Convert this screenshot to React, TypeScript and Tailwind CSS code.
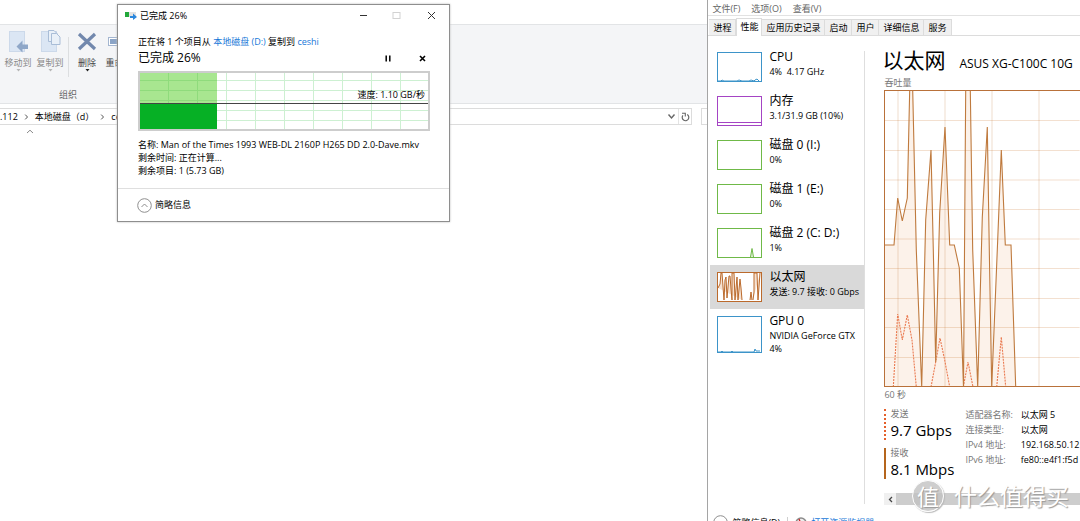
import type { ReactNode } from "react";

const solidLine =
  "0,155 10,155 13.7,108 18.3,131 23.3,108 25.7,0 28.7,0 32.3,160 37.7,297 41.7,130 47,60 49.3,160 51.7,272 55.7,123 61,37 65.7,155 70.3,155 75.3,178 79.5,297 81.7,0 86.3,0 88.7,160 93.7,297 98.3,127 103.3,37 105.3,160 107.7,297 113.7,150 117.3,60 121.3,155 127,155 131.7,297";

const dashedLines = [
  "9.3,297 13.7,224 18.3,250 23.3,225 28,250 32.3,297",
  "47,297 51.7,272 56,248 60.7,270 65.7,297",
  "79.3,297 84,272 89,297",
  "112.7,297 117.3,247 121.7,297",
];

function ThroughputChart() {
  return (
    <svg className="block h-[298px] w-full" role="img" aria-label="吞吐量">
      <polygon points={`0,297 ${solidLine}`} fill="#fcf2ea" />
      {[14, 61, 108, 155].map((x) => (
        <line key={x} x1={x} x2={x} y1="1" y2="297" stroke="#b5651d" strokeOpacity="0.15" strokeWidth="1.5" />
      ))}
      {[30.5, 60.5, 90, 119.5, 149, 178.5, 208.5, 237.5, 267.5].map((y) => (
        <line key={y} x1="0" x2="100%" y1={y} y2={y} stroke="#c8702a" strokeOpacity="0.22" />
      ))}
      {dashedLines.map((points) => (
        <polyline key={points} points={points} fill="none" stroke="#ea7a50" strokeWidth="1.1" strokeDasharray="2 1" />
      ))}
      <polyline points={solidLine} fill="none" stroke="#bf7a3e" strokeWidth="1.1" />
      <path d="M0.5 297V0.5M0 0.5H2000M0 296.5H2000" fill="none" stroke="#b9713a" />
    </svg>
  );
}

type Resource = {
  name: string;
  lines: string[];
  color: string;
  fill: string;
  path?: string;
  active?: boolean;
  tall?: boolean;
};

const resources: Resource[] = [
  { name: "CPU", lines: ["4%\u00a0 4.17 GHz"], color: "#3d94c9", fill: "none", path: "M1 29h3l1-1 2 1h13l2-1 3 1h7l2-1 3 1 1-1 2-1 2 2" },
  { name: "内存", lines: ["3.1/31.9 GB (10%)"], color: "#a544c4", fill: "none", path: "M1 26.5H44" },
  { name: "磁盘 0 (I:)", lines: ["0%"], color: "#6fb948", fill: "none" },
  { name: "磁盘 1 (E:)", lines: ["0%"], color: "#6fb948", fill: "none" },
  { name: "磁盘 2 (C: D:)", lines: ["1%"], color: "#6fb948", fill: "#e5f3dc", path: "M33.5 29L35 20.5L36.5 29" },
  {
    name: "以太网",
    lines: ["发送: 9.7 接收: 0 Gbps"],
    color: "#bb6a2c",
    fill: "#f6e2d2",
    path: "M1 16L3 12L4 1L5 1L7 28L8 8L9 5L10 26L12 4L13 4L14 17L15 28V1H17L18 28L20 5L21 28L23 7L24 16L25 28M33 28L34 20L35 28M36 28L37 20V1H39L40 1L41 28L43 1",
    active: true,
  },
  { name: "GPU 0", lines: ["NVIDIA GeForce GTX", "4%"], color: "#3d94c9", fill: "none", path: "M1 36h3l1-1 1 1h8l1-1 1 1h21l1-3 1 2h4", tall: true },
];

function ResourceItem({ item }: { item: Resource }) {
  const h = item.tall ? 37 : 30;
  return (
    <button
      type="button"
      className={`flex w-full shrink-0 items-start gap-[7px] overflow-hidden pl-[7px] pt-[7px] text-left whitespace-nowrap ${
        item.tall ? "h-[58px]" : "h-11"
      } ${item.active ? "bg-[#d9d9d9]" : ""}`}
    >
      <svg className="shrink-0" width="45" height={h} viewBox={`0 0 45 ${h}`}>
        <rect x="0.5" y="0.5" width="44" height={h - 1} fill="#fff" stroke={item.color} />
        {item.path && <path d={item.path} fill={item.fill} stroke={item.color} strokeWidth="1" />}
      </svg>
      <span className="-mt-[3px] block">
        <span className="block text-[12px] leading-4">{item.name}</span>
        {item.lines.map((l) => (
          <span key={l} className="block text-[9px] leading-[13px]">
            {l}
          </span>
        ))}
      </span>
    </button>
  );
}

function RibbonButton({ label, disabled, children }: { label: string; disabled?: boolean; children: ReactNode }) {
  return (
    <button
      type="button"
      className={`flex w-8 shrink-0 flex-col items-center text-[9px] leading-3 whitespace-nowrap ${
        disabled ? "text-[#8a8a8a]" : "text-[#444]"
      }`}
    >
      {children}
      <span className="mt-1">{label}</span>
      <svg width="5" height="3" viewBox="0 0 5 3">
        <path d="M0.500 0H4.500L2.500 2.500Z" fill={disabled ? "#b5b5b5" : "#222"} />
      </svg>
    </button>
  );
}

function Explorer() {
  return (
    <main className="flex w-[65.5%] shrink-0 flex-col overflow-hidden pt-6">
      <div className="flex h-20 flex-col border-y border-[#e2e4e6] bg-[#f4f5f7] pt-1">
        <div className="flex h-14 items-start pl-[2px]">
          <RibbonButton label="移动到" disabled>
            <svg width="22" height="24" viewBox="0 0 22 24">
              <rect x="2.5" y="2.5" width="15" height="20" fill="#dbe6f4" stroke="#ccd9ea" />
              <path d="M9.500 17.500L15.500 11.500V15.500H21V20H15.500V23.500Z" fill="#8fa7c8" />
            </svg>
          </RibbonButton>
          <RibbonButton label="复制到" disabled>
            <svg width="22" height="24" viewBox="0 0 22 24">
              <rect x="2.500" y="2.500" width="15" height="20" fill="#dbe6f4" stroke="#ccd9ea" />
              <path d="M9.500 1.500H15L18.500 5V12.500H9.500Z" fill="#e9f0f8" stroke="#a9bdd7" />
              <path d="M12.500 4.500H17.500L21 8V15.500H12.500Z" fill="#e9f0f8" stroke="#a9bdd7" />
            </svg>
          </RibbonButton>
          <div className="mx-[2px] mt-2 h-10 w-px bg-[#dcdee0]" />
          <RibbonButton label="删除">
            <svg width="22" height="24" viewBox="0 0 22 24">
              <path d="M3 5L19 20M19 5L3 20" stroke="#7288ad" strokeWidth="3.200" />
            </svg>
          </RibbonButton>
          <RibbonButton label="重命名">
            <svg width="22" height="24" viewBox="0 0 22 24">
              <rect x="0.500" y="8.500" width="21" height="8" fill="#fff" stroke="#a4b6d0" />
              <rect x="2" y="10" width="17" height="5" fill="#8ba4c6" />
            </svg>
          </RibbonButton>
        </div>
        <div className="mt-1 pl-[59px] text-[9px] leading-3 text-[#666]">组织</div>
      </div>
      <div className="mt-1 flex h-[17px] gap-[9px]">
        <nav className="flex flex-1 items-center border-y border-r border-[#dcdcdc] text-[9px] leading-3 whitespace-nowrap">
          <button type="button">.112</button>
          <Chevron />
          <button type="button">本地磁盘（d）</button>
          <Chevron />
          <button type="button">ceshi</button>
          <button type="button" aria-label="展开" className="ml-auto pr-[2px]">
            <svg width="9" height="7" viewBox="0 0 9 7">
              <path d="M1.500 1.500L4.500 5L7.500 1.500" fill="none" stroke="#666" strokeWidth="1.400" />
            </svg>
          </button>
          <button type="button" aria-label="刷新" className="flex h-full w-[13px] items-center justify-center border-l border-[#e4e4e4]">
            <svg width="9" height="10" viewBox="0 0 9 10">
              <path d="M6.200 2.600A3.300 3.300 0 1 1 1.900 3.400" fill="none" stroke="#666" strokeWidth="1.200" />
              <path d="M1 1.200H4.300V4.500" fill="none" stroke="#666" strokeWidth="1.100" />
            </svg>
          </button>
        </nav>
        <input aria-label="搜索" className="w-[6px] border-y border-l border-[#dcdcdc]" />
      </div>
      <svg className="mt-1 ml-[26px]" width="8" height="5" viewBox="0 0 8 5">
        <path d="M1 4L4 1.200L7 4" fill="none" stroke="#8a8a8a" />
      </svg>
    </main>
  );
}

function Chevron() {
  return (
    <svg className="mx-[6px] shrink-0" width="5" height="6" viewBox="0 0 5 6">
      <path d="M1.200 0.600L3.500 3L1.200 5.400" fill="none" stroke="#555" />
    </svg>
  );
}

function CopyDialog() {
  return (
    <section
      role="dialog"
      aria-label="已完成 26%"
      className="absolute top-1 left-[117px] w-[333px] border border-[#8e8e8e] bg-white text-[9px] whitespace-nowrap shadow-[0_0_2px_#bbb]"
    >
      <header className="flex h-[21px] items-center pl-[7px]">
        <svg width="12" height="9" viewBox="0 0 12 9">
          <rect x="0" y="1" width="11" height="5" fill="#e2e2e2" />
          <rect x="0" y="1" width="4" height="5" fill="#22a83a" />
          <path d="M5 5H8V2.500L12 6L8 9V7H5Z" fill="#2b87dd" />
        </svg>
        <h1 className="ml-[3px] flex-1">已完成 26%</h1>
        <button type="button" aria-label="最小化" className="flex w-[34px] justify-center">
          <svg width="9" height="9" viewBox="0 0 9 9">
            <path d="M1 4.500H8" stroke="#333" />
          </svg>
        </button>
        <button type="button" aria-label="最大化" className="flex w-[33px] justify-center">
          <svg width="9" height="9" viewBox="0 0 9 9">
            <rect x="1" y="1.500" width="7" height="6" fill="none" stroke="#d2d2d2" />
          </svg>
        </button>
        <button type="button" aria-label="关闭" className="flex w-9 justify-center">
          <svg width="9" height="9" viewBox="0 0 9 9">
            <path d="M1 1L8 8M8 1L1 8" stroke="#333" />
          </svg>
        </button>
      </header>
      <div className="pt-[10px] pr-[19px] pl-5">
        <p className="leading-3">
          正在将 1 个项目从{" "}
          <a href="#source" className="text-[#1878d8]">
            本地磁盘 (D:)
          </a>{" "}
          复制到{" "}
          <a href="#target" className="text-[#1878d8]">
            ceshi
          </a>
        </p>
        <div className="flex h-5 items-center pr-1">
          <h2 className="flex-1 text-[12px] leading-4">已完成 26%</h2>
          <button type="button" aria-label="暂停">
            <svg width="6" height="7" viewBox="0 0 6 7">
              <path d="M1.200 0.500V6.500M4.800 0.500V6.500" stroke="#000" strokeWidth="1.500" />
            </svg>
          </button>
          <button type="button" aria-label="取消" className="ml-7">
            <svg width="7" height="7" viewBox="0 0 7 7">
              <path d="M1 1L6 6M6 1L1 6" stroke="#000" strokeWidth="1.600" />
            </svg>
          </button>
        </div>
        <div className="relative mt-[3px] h-[60px] border-2 border-[#cdcdcd]">
          <svg className="block size-full" role="img" aria-label="速度">
            {[86, 115, 144, 173, 202, 231, 260].map((x) => (
              <path key={x} d={`M${x + 0.500} 0V56`} stroke="#cdf0d2" />
            ))}
            {[7, 17, 27, 37, 47].map((y) => (
              <path key={y} d={`M0 ${y + 0.500}H2000`} stroke="#cdf0d2" />
            ))}
            <rect width="77" height="30" fill="#a8e690" />
            <path d="M28.500 0V30M57.500 0V30M0 7.500H77M0 17.500H77M0 27.500H77" stroke="#8fdb7c" />
            <rect y="30" width="77" height="26" fill="#06b025" />
            <path d="M0 30.500H2000" stroke="#444" />
          </svg>
          <span className="absolute right-[3px] bottom-[28px] leading-3">速度: 1.10 GB/秒</span>
        </div>
        <div className="pt-[7px] pb-[11px] leading-[13px]">
          <p>名称: Man of the Times 1993 WEB-DL 2160P H265 DD 2.0-Dave.mkv</p>
          <p>剩余时间: 正在计算...</p>
          <p>剩余项目: 1 (5.73 GB)</p>
        </div>
      </div>
      <footer className="border-t border-[#dfdfdf]">
        <button type="button" className="flex h-8 items-center gap-[3px] pl-[19px]">
          <CircleUp />
          简略信息
        </button>
      </footer>
    </section>
  );
}

function CircleUp() {
  return (
    <svg width="15" height="15" viewBox="0 0 15 15" fill="none">
      <circle cx="7.500" cy="7.500" r="6.800" stroke="#8f8f8f" />
      <path d="M4.500 9L7.500 6L10.500 9" stroke="#8f8f8f" />
    </svg>
  );
}

const tabs = ["进程", "性能", "应用历史记录", "启动", "用户", "详细信息", "服务"];

const adapter = [
  ["适配器名称:", "以太网 5"],
  ["连接类型:", "以太网"],
  ["IPv4 地址:", "192.168.50.12"],
  ["IPv6 地址:", "fe80::e4f1:f5d"],
];

function TaskManager() {
  return (
    <aside className="flex min-w-0 flex-1 flex-col overflow-hidden border-l border-[#a5a5a5] bg-white text-[9px] whitespace-nowrap">
      <div className="flex h-4 shrink-0 gap-[11px] border-b border-[#e2e2e2] pt-[2px] pl-1 leading-3 text-[#666]">
        <button type="button">文件(F)</button>
        <button type="button">选项(O)</button>
        <button type="button">查看(V)</button>
      </div>
      <div role="tablist" className="flex h-5 shrink-0 items-end border-b border-[#dcdcdc] pl-px">
        {tabs.map((t) => (
          <button
            key={t}
            type="button"
            role="tab"
            aria-selected={t === "性能"}
            className={
              t === "性能"
                ? "-mb-px h-[18px] border-x border-t border-[#dcdcdc] bg-white px-[3px] pb-[2px] leading-3"
                : "h-4 border-t border-r border-[#dcdcdc] bg-[#f0f0f0] px-1 leading-3"
            }
          >
            {t}
          </button>
        ))}
      </div>
      <div className="flex min-h-0 shrink-0">
        <div className="flex w-[156px] shrink-0 flex-col pt-[9px] pl-[2px]">
          {resources.map((r) => (
            <ResourceItem key={r.name} item={r} />
          ))}
        </div>
        <div className="mt-[15px] h-[453px] w-px shrink-0 bg-[#dedede]" />
        <div className="min-w-0 flex-1 overflow-hidden pl-[19px]">
          <div className="flex h-10 items-end gap-[14px]">
            <h2 className="-ml-[2px] text-[21px] leading-[32px]">以太网</h2>
            <span className="pb-[2px] text-[12px] leading-5">ASUS XG-C100C 10G</span>
          </div>
          <p className="leading-[14px] text-[#777]">吞吐量</p>
          <ThroughputChart />
          <p className="pt-px leading-3 text-[#777]">60 秒</p>
          <div className="flex gap-[11px] pt-2">
            <dl className="flex shrink-0 flex-col gap-2">
              <div className="h-[31px] border-l-2 border-dotted border-[#e5602a] pl-1">
                <dt className="leading-[10px] text-[#777]">发送</dt>
                <dd className="text-[15px] leading-[22px]">9.7 Gbps</dd>
              </div>
              <div className="h-[31px] border-l-2 border-[#b5651d] pl-1">
                <dt className="leading-[10px] text-[#777]">接收</dt>
                <dd className="text-[15px] leading-[22px]">8.1 Mbps</dd>
              </div>
            </dl>
            <dl className="-mt-[2px] grid grid-cols-[auto_auto] gap-x-2 self-start leading-[15px]">
              {adapter.map(([k, v]) => (
                <div key={k} className="contents">
                  <dt className="text-[#777]">{k}</dt>
                  <dd>{v}</dd>
                </div>
              ))}
            </dl>
          </div>
          <div className="mt-[14px] flex h-3 bg-[#f0f0f0]">
            <button type="button" aria-label="向左滚动" className="flex w-3 items-center justify-center">
              <svg width="5" height="7" viewBox="0 0 5 7">
                <path d="M4 1L1.500 3.500L4 6" fill="none" stroke="#444" strokeWidth="1.300" />
              </svg>
            </button>
            <div className="flex-1 bg-[#cdcdcd]" />
          </div>
        </div>
      </div>
      <footer className="mt-[10px] flex shrink-0 items-center gap-1 pl-[5px] leading-3">
        <button type="button" className="flex items-center gap-1">
          <CircleUp />
          简略信息(D)
        </button>
        <span className="mx-[3px] h-3 w-px bg-[#cfcfcf]" />
        <svg width="12" height="12" viewBox="0 0 12 12">
          <circle cx="6" cy="6" r="5" fill="#eee" stroke="#8a8a8a" strokeWidth="1.500" />
          <path d="M6 7L4 2" stroke="#c22" strokeWidth="1.300" />
        </svg>
        <a href="#monitor" className="text-[#1878d8]">
          打开资源监视器
        </a>
      </footer>
    </aside>
  );
}

function Watermark() {
  return (
    <div className="absolute right-[11px] bottom-[9px] flex items-center gap-[10px] text-white [text-shadow:1px_1px_1px_#999]">
      <span className="flex size-8 items-center justify-center rounded-full border border-white bg-[#c2c2c2]/80 text-[22px] leading-8 shadow-[1px_1px_1px_#bbb]">
        值
      </span>
      <span className="text-[23px] leading-8">什么值得买</span>
    </div>
  );
}

export default function App() {
  return (
    <div className="relative flex h-screen overflow-hidden bg-white font-['Open_Sans','Noto_Sans_CJK_SC',sans-serif] text-black">
      <Explorer />
      <TaskManager />
      <CopyDialog />
      <Watermark />
    </div>
  );
}
